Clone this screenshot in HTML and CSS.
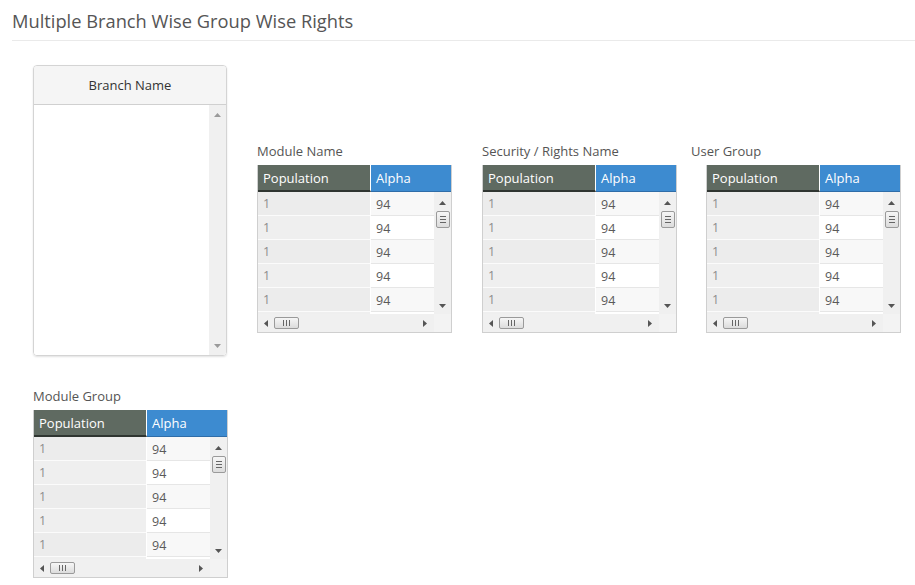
FILE: index.html
```html
<!DOCTYPE html>
<html>
<head>
<meta charset="utf-8">
<link rel="stylesheet" href="styles.css">
</head>
<body>
<h1 class="title">Multiple Branch Wise Group Wise Rights</h1>
<div class="content">
  <div class="row-top">
    <div class="branch">
      <div class="branch-head">Branch Name</div>
      <div class="branch-body">
        <div class="branch-list"></div>
        <div class="vscroll tall">
          <svg class="arr" width="7" height="4" viewBox="0 0 7 4"><path d="M0 4 L3.5 0 L7 4Z" fill="#9a9a9a"/></svg>
          <svg class="arr" width="7" height="4" viewBox="0 0 7 4"><path d="M0 0 L3.5 4 L7 0Z" fill="#9a9a9a"/></svg>
        </div>
      </div>
    </div>

    <div class="section s1">
      <div class="label">Module Name</div>
      <div class="grid">
        <div class="ghead"><div class="gh gh-pop">Population</div><div class="gh gh-alpha">Alpha</div></div>
        <div class="gbody">
          <div class="gcols">
            <div class="grow odd"><div class="c-pop">1</div><div class="c-alpha">94</div></div>
            <div class="grow"><div class="c-pop">1</div><div class="c-alpha">94</div></div>
            <div class="grow odd"><div class="c-pop">1</div><div class="c-alpha">94</div></div>
            <div class="grow"><div class="c-pop">1</div><div class="c-alpha">94</div></div>
            <div class="grow odd"><div class="c-pop">1</div><div class="c-alpha">94</div></div>
            <div class="grow"><div class="c-pop"></div><div class="c-alpha"></div></div>
          </div>
          <div class="vscroll">
            <svg class="arr" width="7" height="4" viewBox="0 0 7 4"><path d="M0 4 L3.5 0 L7 4Z" fill="#555"/></svg>
            <div class="vthumb"><span></span><span></span><span></span></div>
            <div class="spacer"></div>
            <svg class="arr" width="7" height="4" viewBox="0 0 7 4"><path d="M0 0 L3.5 4 L7 0Z" fill="#555"/></svg>
          </div>
        </div>
        <div class="hbar">
          <div class="hscroll">
            <svg class="arr" width="4" height="7" viewBox="0 0 4 7"><path d="M4 0 L0 3.5 L4 7Z" fill="#555"/></svg>
            <div class="hthumb"><span></span><span></span><span></span></div>
            <div class="spacer"></div>
            <svg class="arr" width="4" height="7" viewBox="0 0 4 7"><path d="M0 0 L4 3.5 L0 7Z" fill="#555"/></svg>
          </div>
          <div class="corner"></div>
        </div>
      </div>
    </div>

    <div class="section s2">
      <div class="label">Security / Rights Name</div>
      <div class="grid">
        <div class="ghead"><div class="gh gh-pop">Population</div><div class="gh gh-alpha">Alpha</div></div>
        <div class="gbody">
          <div class="gcols">
            <div class="grow odd"><div class="c-pop">1</div><div class="c-alpha">94</div></div>
            <div class="grow"><div class="c-pop">1</div><div class="c-alpha">94</div></div>
            <div class="grow odd"><div class="c-pop">1</div><div class="c-alpha">94</div></div>
            <div class="grow"><div class="c-pop">1</div><div class="c-alpha">94</div></div>
            <div class="grow odd"><div class="c-pop">1</div><div class="c-alpha">94</div></div>
            <div class="grow"><div class="c-pop"></div><div class="c-alpha"></div></div>
          </div>
          <div class="vscroll">
            <svg class="arr" width="7" height="4" viewBox="0 0 7 4"><path d="M0 4 L3.5 0 L7 4Z" fill="#555"/></svg>
            <div class="vthumb"><span></span><span></span><span></span></div>
            <div class="spacer"></div>
            <svg class="arr" width="7" height="4" viewBox="0 0 7 4"><path d="M0 0 L3.5 4 L7 0Z" fill="#555"/></svg>
          </div>
        </div>
        <div class="hbar">
          <div class="hscroll">
            <svg class="arr" width="4" height="7" viewBox="0 0 4 7"><path d="M4 0 L0 3.5 L4 7Z" fill="#555"/></svg>
            <div class="hthumb"><span></span><span></span><span></span></div>
            <div class="spacer"></div>
            <svg class="arr" width="4" height="7" viewBox="0 0 4 7"><path d="M0 0 L4 3.5 L0 7Z" fill="#555"/></svg>
          </div>
          <div class="corner"></div>
        </div>
      </div>
    </div>

    <div class="section s3">
      <div class="label">User Group</div>
      <div class="grid indent">
        <div class="ghead"><div class="gh gh-pop">Population</div><div class="gh gh-alpha">Alpha</div></div>
        <div class="gbody">
          <div class="gcols">
            <div class="grow odd"><div class="c-pop">1</div><div class="c-alpha">94</div></div>
            <div class="grow"><div class="c-pop">1</div><div class="c-alpha">94</div></div>
            <div class="grow odd"><div class="c-pop">1</div><div class="c-alpha">94</div></div>
            <div class="grow"><div class="c-pop">1</div><div class="c-alpha">94</div></div>
            <div class="grow odd"><div class="c-pop">1</div><div class="c-alpha">94</div></div>
            <div class="grow"><div class="c-pop"></div><div class="c-alpha"></div></div>
          </div>
          <div class="vscroll">
            <svg class="arr" width="7" height="4" viewBox="0 0 7 4"><path d="M0 4 L3.5 0 L7 4Z" fill="#555"/></svg>
            <div class="vthumb"><span></span><span></span><span></span></div>
            <div class="spacer"></div>
            <svg class="arr" width="7" height="4" viewBox="0 0 7 4"><path d="M0 0 L3.5 4 L7 0Z" fill="#555"/></svg>
          </div>
        </div>
        <div class="hbar">
          <div class="hscroll">
            <svg class="arr" width="4" height="7" viewBox="0 0 4 7"><path d="M4 0 L0 3.5 L4 7Z" fill="#555"/></svg>
            <div class="hthumb"><span></span><span></span><span></span></div>
            <div class="spacer"></div>
            <svg class="arr" width="4" height="7" viewBox="0 0 4 7"><path d="M0 0 L4 3.5 L0 7Z" fill="#555"/></svg>
          </div>
          <div class="corner"></div>
        </div>
      </div>
    </div>
  </div>

  <div class="row-bottom">
    <div class="section">
      <div class="label">Module Group</div>
      <div class="grid">
        <div class="ghead"><div class="gh gh-pop">Population</div><div class="gh gh-alpha">Alpha</div></div>
        <div class="gbody">
          <div class="gcols">
            <div class="grow odd"><div class="c-pop">1</div><div class="c-alpha">94</div></div>
            <div class="grow"><div class="c-pop">1</div><div class="c-alpha">94</div></div>
            <div class="grow odd"><div class="c-pop">1</div><div class="c-alpha">94</div></div>
            <div class="grow"><div class="c-pop">1</div><div class="c-alpha">94</div></div>
            <div class="grow odd"><div class="c-pop">1</div><div class="c-alpha">94</div></div>
            <div class="grow"><div class="c-pop"></div><div class="c-alpha"></div></div>
          </div>
          <div class="vscroll">
            <svg class="arr" width="7" height="4" viewBox="0 0 7 4"><path d="M0 4 L3.5 0 L7 4Z" fill="#555"/></svg>
            <div class="vthumb"><span></span><span></span><span></span></div>
            <div class="spacer"></div>
            <svg class="arr" width="7" height="4" viewBox="0 0 7 4"><path d="M0 0 L3.5 4 L7 0Z" fill="#555"/></svg>
          </div>
        </div>
        <div class="hbar">
          <div class="hscroll">
            <svg class="arr" width="4" height="7" viewBox="0 0 4 7"><path d="M4 0 L0 3.5 L4 7Z" fill="#555"/></svg>
            <div class="hthumb"><span></span><span></span><span></span></div>
            <div class="spacer"></div>
            <svg class="arr" width="4" height="7" viewBox="0 0 4 7"><path d="M0 0 L4 3.5 L0 7Z" fill="#555"/></svg>
          </div>
          <div class="corner"></div>
        </div>
      </div>
    </div>
  </div>
</div>
</body>
</html>
```
FILE: styles.css
```css
* { box-sizing: border-box; }
body {
  margin: 0;
  font-family: "Open Sans", "Noto Sans", sans-serif;
  color: #555;
  background: #fff;
}
.title {
  margin: 0 0 0 12px;
  font-size: 18.3px;
  font-weight: 400;
  color: #555;
  height: 41px;
  line-height: 24px;
  padding-top: 9px;
  border-bottom: 1px solid #eaeaea;
}
.content {
  padding-left: 33px;
}
.row-top {
  display: flex;
  align-items: flex-start;
}
.branch {
  width: 194px;
  height: 291px;
  margin-top: 24px;
  border: 1px solid #d4d4d4;
  border-radius: 4px;
  box-shadow: 0 1px 2px rgba(0,0,0,0.12);
  display: flex;
  flex-direction: column;
  overflow: hidden;
}
.branch-head {
  height: 39px;
  background: #f5f5f5;
  border-bottom: 1px solid #d0d0d0;
  font-size: 13px;
  color: #333;
  text-align: center;
  line-height: 38px;
}
.branch-body {
  flex: 1;
  display: flex;
  background: #fff;
}
.branch-list { flex: 1; }
.vscroll {
  width: 17px;
  background: #f0f0f0;
  display: flex;
  flex-direction: column;
  align-items: center;
  padding: 8px 0 7px;
}
.vscroll.tall {
  justify-content: space-between;
  padding: 8px 0 7px;
}
.spacer { flex: 1; }
.arr { display: block; flex: none; }
.section {
  width: 195px;
}
.s1 { margin-left: 30px; margin-top: 101px; }
.s2 { margin-left: 30px; margin-top: 101px; }
.s3 { margin-left: 14px; margin-top: 101px; width: 210px; }
.label {
  font-size: 13px;
  color: #555;
  height: 23px;
  line-height: 18px;
}
.grid {
  width: 195px;
  border: 1px solid #cfcfcf;
  border-top: none;
  background: #fff;
}
.grid.indent { margin-left: 15px; }
.ghead {
  display: flex;
  height: 27px;
}
.gh {
  font-size: 13px;
  color: #fff;
  line-height: 26px;
  padding-left: 5px;
}
.gh-pop {
  width: 113px;
  background: #5f6a61;
  border-right: 1px solid #fff;
  border-bottom: 2px solid #2f3531;
}
.gh-alpha {
  flex: 1;
  background: #3d8bd0;
  border-bottom: 1px solid #2f6da8;
}
.gbody {
  display: flex;
  height: 122px;
}
.gcols {
  flex: 1;
  overflow: hidden;
}
.grow {
  display: flex;
  height: 24px;
  font-size: 12.5px;
}
.c-pop {
  width: 113px;
  background: #efefef;
  border-bottom: 1px solid #fbfbfb;
  border-right: 1px solid #fff;
  color: #8c8c8c;
  padding-left: 5px;
  line-height: 23px;
}
.c-alpha {
  flex: 1;
  background: #fff;
  border-bottom: 1px solid #e6e6e6;
  color: #5a5a5a;
  padding-left: 5px;
  line-height: 25px;
}
.grow.odd .c-alpha { background: #f8f8f8; }
.grow.odd .c-pop { background: #ececec; }
.gbody .vscroll {
  padding: 9px 0 6px;
}
.vthumb {
  margin-top: 6px;
  width: 14px;
  height: 17px;
  border: 1px solid #9a9a9a;
  border-radius: 2px;
  background: linear-gradient(#f6f6f6, #dcdcdc);
  display: flex;
  flex-direction: column;
  justify-content: center;
  align-items: center;
  gap: 2px;
}
.vthumb span {
  display: block;
  width: 6px;
  height: 1px;
  background: #666;
}
.hbar {
  display: flex;
  height: 18px;
}
.hscroll {
  flex: 1;
  background: #f0f0f0;
  display: flex;
  align-items: center;
  padding: 0 7px 0 6px;
}
.hthumb {
  margin-left: 6px;
  width: 25px;
  height: 12px;
  border: 1px solid #9a9a9a;
  border-radius: 2px;
  background: linear-gradient(#f6f6f6, #dcdcdc);
  display: flex;
  justify-content: center;
  align-items: center;
  gap: 2px;
}
.hthumb span {
  display: block;
  width: 1px;
  height: 6px;
  background: #666;
}
.corner {
  width: 17px;
  background: #f3f3f3;
}
.row-bottom {
  margin-top: 31px;
}
```
